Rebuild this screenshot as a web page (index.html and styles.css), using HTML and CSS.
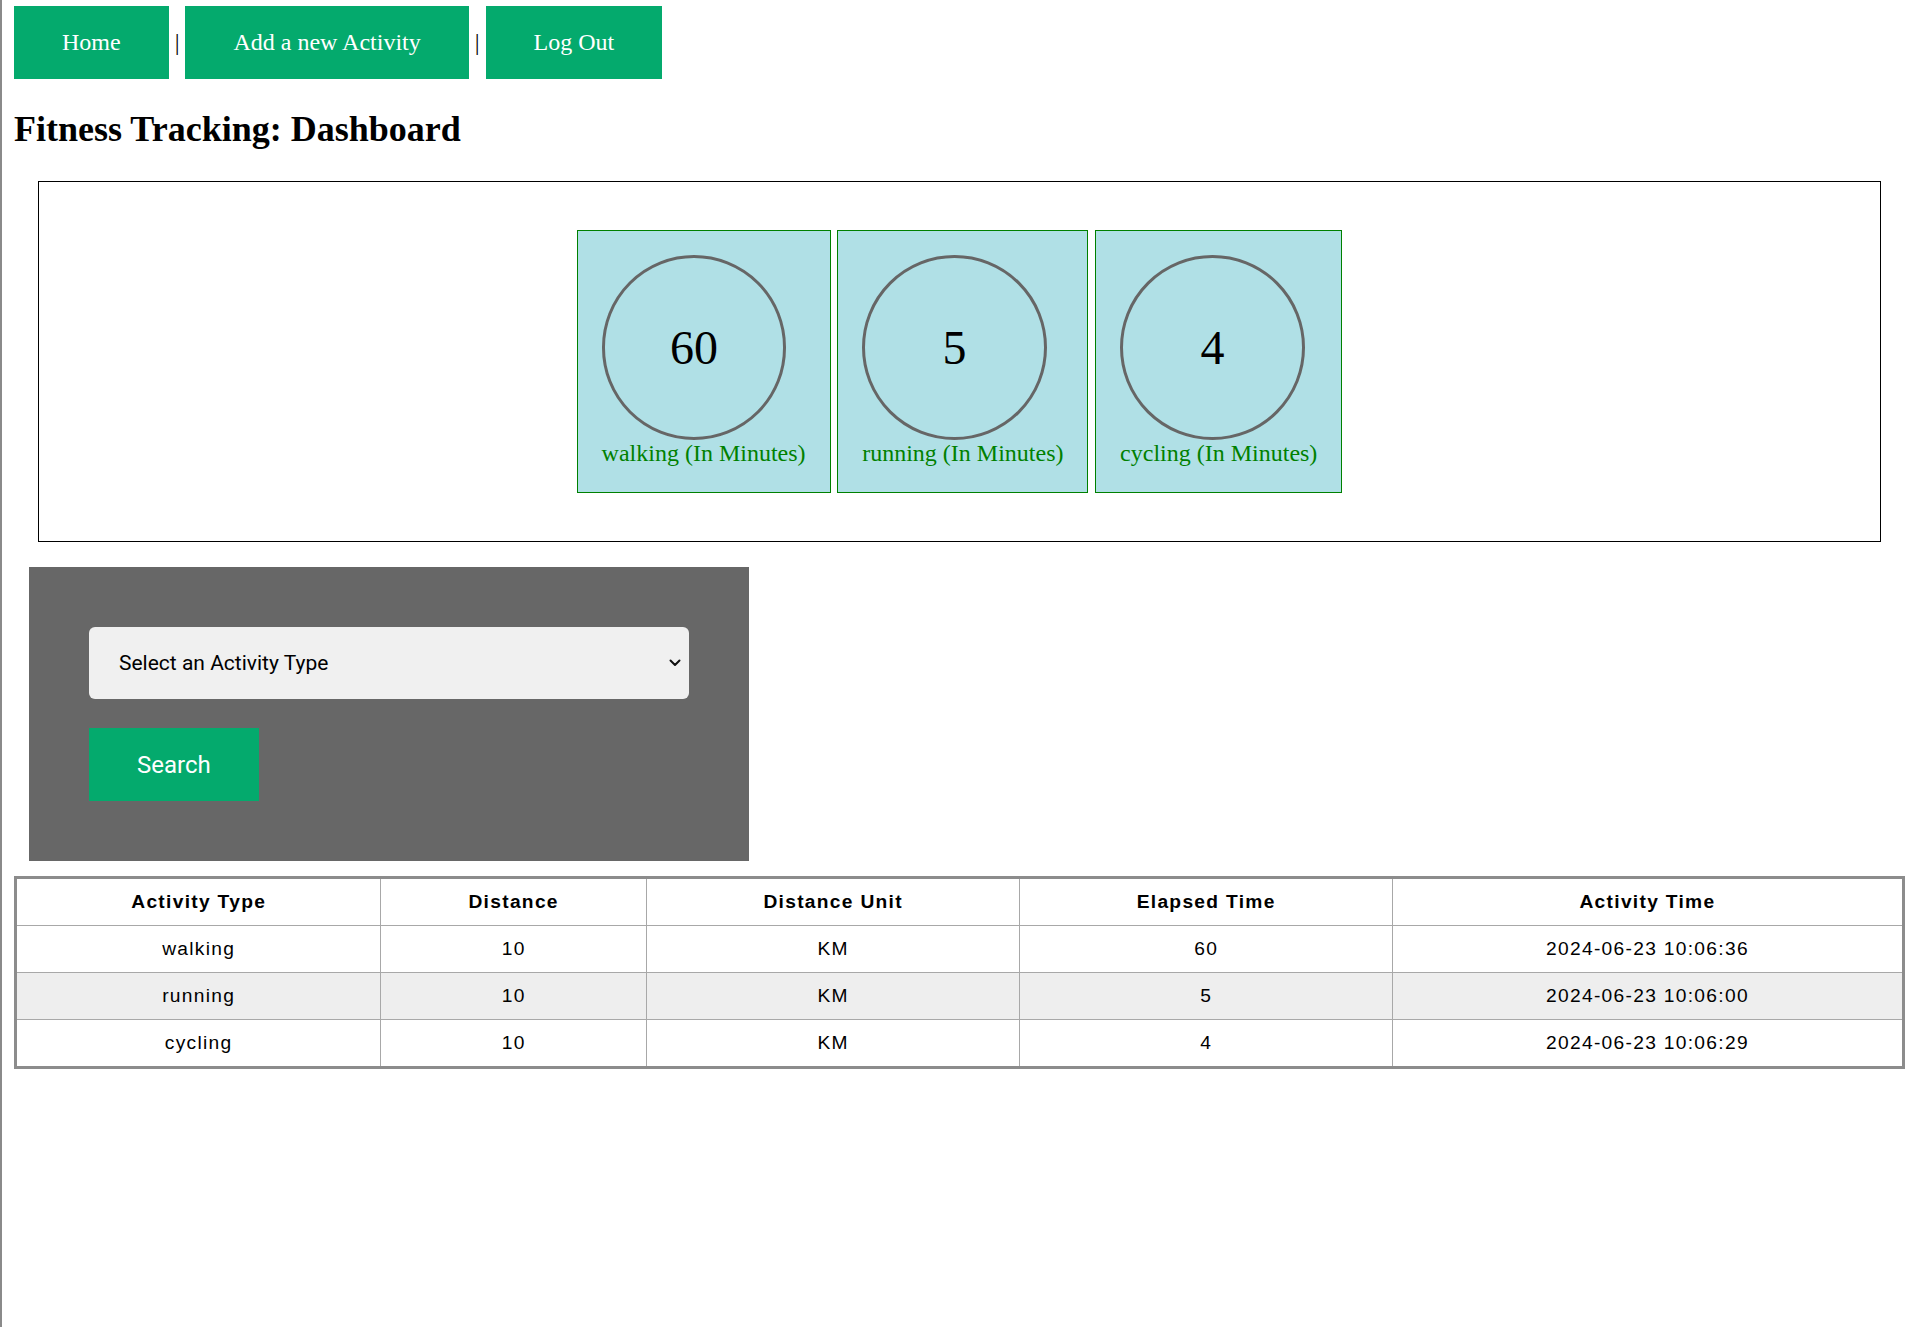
FILE: index.html
```html
<!DOCTYPE html>
<html lang="en">
<head>
<meta charset="utf-8">
<title>Fitness Tracking: Dashboard</title>
<link rel="stylesheet" href="styles.css">
</head>
<body>
<nav class="nav"><a class="btn" href="#">Home</a> | <a class="btn" href="#">Add a new Activity</a> | <a class="btn" href="#">Log Out</a></nav>

<h2 class="title">Fitness Tracking: Dashboard</h2>

<section class="summary">
  <div class="cards">
    <div class="card">
      <div class="ring">60</div>
      <div class="label">walking (In Minutes)</div>
    </div>
    <div class="card">
      <div class="ring">5</div>
      <div class="label">running (In Minutes)</div>
    </div>
    <div class="card">
      <div class="ring">4</div>
      <div class="label">cycling (In Minutes)</div>
    </div>
  </div>
</section>

<form class="search" onsubmit="return false;">
  <div class="select-wrap">
    <select class="select">
      <option>Select an Activity Type</option>
      <option>walking</option>
      <option>running</option>
      <option>cycling</option>
    </select>
    <svg class="chev" width="12" height="8" viewBox="0 0 12 8" aria-hidden="true"><path d="M1.5 1.5 L6 6 L10.5 1.5" fill="none" stroke="#111" stroke-width="2" stroke-linecap="round" stroke-linejoin="round"/></svg>
  </div>
  <button class="search-btn" type="submit">Search</button>
</form>

<table class="activities">
  <thead>
    <tr>
      <th class="c1">Activity Type</th>
      <th class="c2">Distance</th>
      <th class="c3">Distance Unit</th>
      <th class="c4">Elapsed Time</th>
      <th class="c5">Activity Time</th>
    </tr>
  </thead>
  <tbody>
    <tr><td>walking</td><td>10</td><td>KM</td><td>60</td><td>2024-06-23 10:06:36</td></tr>
    <tr><td>running</td><td>10</td><td>KM</td><td>5</td><td>2024-06-23 10:06:00</td></tr>
    <tr><td>cycling</td><td>10</td><td>KM</td><td>4</td><td>2024-06-23 10:06:29</td></tr>
  </tbody>
</table>
</body>
</html>
```
FILE: styles.css
```css
html {
  min-height: 100%;
  box-sizing: border-box;
  border-left: 2px solid #8a8a8a;
  background: #fff;
}

body {
  margin: 0;
  padding: 6px 14px 0 12px;
  font-family: "Liberation Serif", "Times New Roman", serif;
  color: #000;
}

.nav {
  font-size: 24px;
  line-height: 27.6px;
  color: #000;
}

.btn {
  display: inline-block;
  padding: 22.7px 48px;
  background: #04aa6d;
  color: #fff;
  text-decoration: none;
}

.title {
  font-size: 36px;
  font-weight: bold;
  margin: 29.5px 0 31px 0;
}

.summary {
  margin: 0 24px 25px 24px;
  border: 1px solid #000;
  padding: 48px;
}

.cards {
  display: flex;
  justify-content: center;
  gap: 6.6px;
}

.card {
  padding: 24px 24px 24.6px 24px;
  border: 1px solid #008000;
  background: #b0e0e6;
  color: #008000;
  font-size: 24px;
  line-height: 27.6px;
}

.ring {
  box-sizing: border-box;
  width: 184.8px;
  height: 184.8px;
  border: 3px solid #666;
  border-radius: 50%;
  display: flex;
  align-items: center;
  justify-content: center;
  font-size: 48px;
  color: #000;
}

.label {
  white-space: nowrap;
}

.search {
  box-sizing: border-box;
  width: 720px;
  margin: 0 0 15px 15px;
  padding: 60px;
  background: #676767;
}

.select-wrap {
  position: relative;
}

.select {
  display: block;
  box-sizing: border-box;
  width: 100%;
  height: 72px;
  padding: 0 40px 0 30px;
  border: none;
  border-radius: 6px;
  background: #f0f0f0;
  color: #000;
  font-family: Roboto, "Liberation Sans", sans-serif;
  font-size: 21px;
  -webkit-appearance: none;
  appearance: none;
  outline: none;
}

.chev {
  position: absolute;
  right: 8px;
  top: 32px;
  pointer-events: none;
}

.search-btn {
  display: block;
  margin-top: 28.6px;
  height: 73.3px;
  padding: 0 48px;
  border: none;
  background: #04aa6d;
  color: #fff;
  font-family: Roboto, "Liberation Sans", sans-serif;
  font-size: 24px;
  cursor: pointer;
}

.activities {
  width: 100%;
  border-collapse: collapse;
  table-layout: fixed;
  border: 3px solid #8c8c8c;
  font-family: "Liberation Sans", Arial, sans-serif;
  font-size: 19.2px;
  letter-spacing: 1.3px;
  color: #000;
}

.activities th,
.activities td {
  border: 1px solid #a8a8a8;
  padding: 12px 8px;
  text-align: center;
  line-height: 22px;
  font-weight: normal;
}

.activities th {
  font-weight: bold;
}

.activities tbody tr:nth-child(2) {
  background: #eeeeee;
}

.c1 { width: 347.4px; }
.c2 { width: 248.5px; }
.c3 { width: 356.5px; }
.c4 { width: 355.5px; }
```
